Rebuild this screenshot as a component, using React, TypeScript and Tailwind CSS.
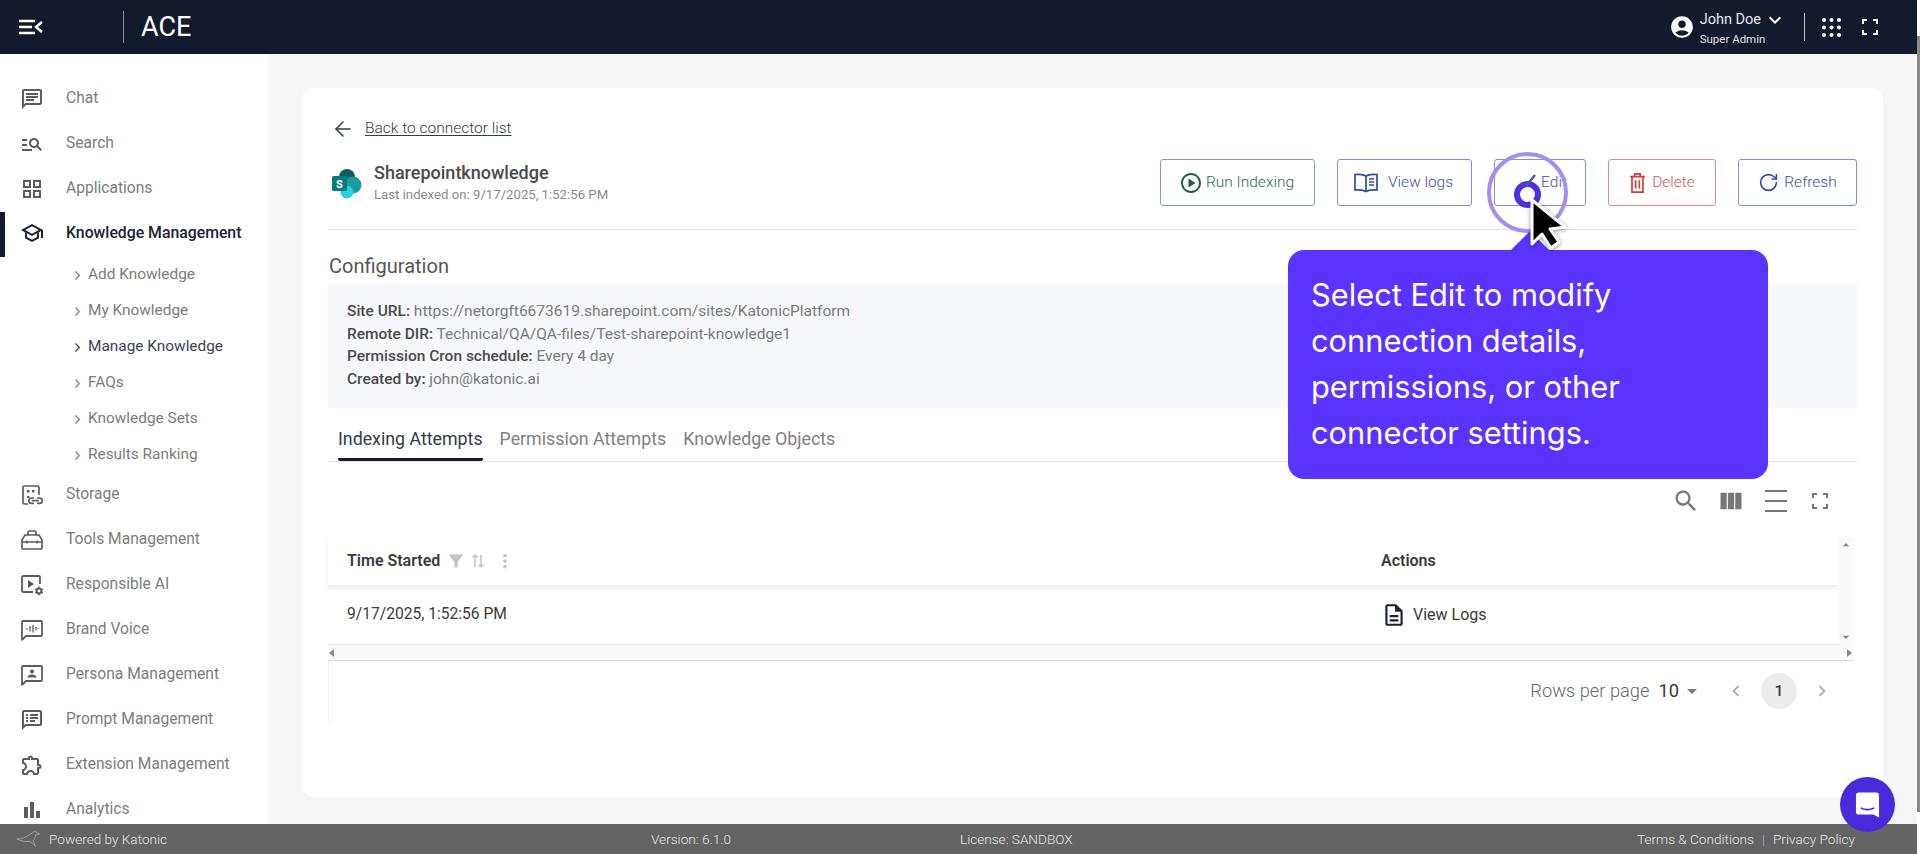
import React from 'react';
import { ChevronRight, RotateCw, ArrowLeft } from 'lucide-react';
import {
  MdOutlineChat,
  MdOutlineManageSearch,
  MdOutlineGridView,
  MdOutlineSchool,
  MdOutlineExtension,
  MdBarChart,
  MdSearch,
  MdViewColumn,
  MdAccountCircle,
  MdKeyboardArrowDown,
  MdOutlinePlayCircle,
  MdOutlineDescription,
  MdFilterAlt,
  MdMoreVert,
  MdChevronLeft,
  MdChevronRight,
  MdArrowDropDown,
  MdOutlineSpeakerNotes,
  MdArrowDropUp,
} from 'react-icons/md';

type IconProps = { className?: string };

const StorageIcon = ({ className }: IconProps) => (
  <svg viewBox="0 0 24 24" fill="none" stroke="currentColor" strokeWidth="1.7" className={className}>
    <path d="M8 21H4.500A1.500 1.500 0 0 1 3 19.500V4.500A1.500 1.500 0 0 1 4.500 3h13A1.500 1.500 0 0 1 19 4.500V12" />
    <path d="M7 7h2.500v2.500H7zM12 7h2.500v2.500H12zM7 13h2.500v2H7z" fill="currentColor" stroke="none" />
    <path d="M14 15h-2.500a2.700 2.700 0 0 0 0 5.400H14M17 15h2.500a2.700 2.700 0 0 1 0 5.400H17M12 17.700h7" />
  </svg>
);

const ToolboxIcon = ({ className }: IconProps) => (
  <svg viewBox="0 0 24 24" fill="none" stroke="currentColor" strokeWidth="1.700" className={className}>
    <path d="M2 12l3-5h14l3 5v8a1 1 0 0 1-1 1H3a1 1 0 0 1-1-1z" />
    <path d="M8 7V4.500A1.500 1.500 0 0 1 9.500 3h5A1.500 1.500 0 0 1 16 4.500V7M2 14h20M7 12.500v3M17 12.500v3" />
  </svg>
);

const ResponsibleIcon = ({ className }: IconProps) => (
  <svg viewBox="0 0 24 24" fill="none" stroke="currentColor" strokeWidth="1.8" className={className}>
    <path d="M13 19H3.500A1.500 1.500 0 0 1 2 17.500v-13A1.500 1.500 0 0 1 3.500 3h15A1.500 1.500 0 0 1 20 4.500V11" />
    <path d="M8 7l6 4-6 4z" fill="currentColor" stroke="none" />
    <circle cx="19" cy="18" r="2.400" strokeWidth="2" />
    <path d="M19 13.800v1.500M19 20.700v1.500M15.300 16l1.300.7M21.400 19.300l1.300.7M15.300 20l1.300-.7M21.400 16.700l1.300-.7" strokeWidth="1.600" />
  </svg>
);

const BrandVoiceIcon = ({ className }: IconProps) => (
  <svg viewBox="0 0 24 24" fill="none" stroke="currentColor" strokeWidth="1.8" className={className}>
    <path d="M3 3h18a1 1 0 0 1 1 1v13a1 1 0 0 1-1 1H6l-3.500 3.500H2V4a1 1 0 0 1 1-1z" />
    <path d="M7 10v1.500M10 8v5.500M13 7v7.500M16 9v3.500M18.500 10v1M5.500 10.500h.1" strokeWidth="1.300" />
  </svg>
);

const PersonaIcon = ({ className }: IconProps) => (
  <svg viewBox="0 0 24 24" fill="none" stroke="currentColor" strokeWidth="1.8" className={className}>
    <path d="M3 3h18a1 1 0 0 1 1 1v13a1 1 0 0 1-1 1H6l-3.500 3.500H2V4a1 1 0 0 1 1-1z" />
    <circle cx="12" cy="8.500" r="2" fill="currentColor" stroke="none" />
    <path d="M7.500 14.500c0-2 2-3 4.500-3s4.500 1 4.500 3z" fill="currentColor" stroke="none" />
  </svg>
);

const KatonicLogo = ({ className }: IconProps) => (
  <svg viewBox="0 0 30 22" fill="none" stroke="#a8a8a8" strokeWidth="1" className={className}>
    <path d="M0 11c6 0 10-2 14-4 2-1 4-3 6-4l3-2 1 2 4 2-5 1c0 3-1 5-3 7l3 7-5-5-3-1c-5 1-10-1-15-3z" />
  </svg>
);

const DotsIcon = ({ className }: IconProps) => (
  <svg viewBox="0 0 19 19" fill="currentColor" className={className}>
    {[2, 9.500, 17].map((cy) =>
      [2, 9.500, 17].map((cx) => <circle key={`${cx}-${cy}`} cx={cx} cy={cy} r="2" />)
    )}
  </svg>
);

const FocusIcon = ({ className }: IconProps) => (
  <svg viewBox="0 0 16 16" fill="none" stroke="currentColor" strokeWidth="2" className={className}>
    <path d="M1 5V1h4M11 1h4v4M15 11v4h-4M5 15H1v-4" />
  </svg>
);

const TrashIcon = ({ className }: IconProps) => (
  <svg viewBox="0 0 18 24" fill="none" stroke="currentColor" strokeWidth="1.800" className={className}>
    <path d="M1 5h16M6 5V2h6v3M3 5v17h12V5M7 9v9M11 9v9" />
  </svg>
);

const BookIcon = ({ className }: IconProps) => (
  <svg viewBox="0 0 26 22" fill="none" stroke="currentColor" strokeWidth="1.700" className={className}>
    <path d="M13 4C11 2.500 7 2 2 2.500v15.500c5-.5 9 0 11 1.500 2-1.500 6-2 11-1.500V2.500C19 2 15 2.500 13 4zM13 4v15.500" />
    <path d="M16 7h5M16 10h5M16 13h5" strokeWidth="1.400" />
  </svg>
);

const MenuCollapseIcon = ({ className }: IconProps) => (
  <svg viewBox="0 0 24 16" fill="none" stroke="currentColor" strokeWidth="2.500" className={className}>
    <path d="M0 2h16M0 8h13M0 14h16M23 3l-6 5 6 5" />
  </svg>
);

const SharepointLogo = ({ className }: IconProps) => (
  <svg viewBox="0 0 32 32" className={className}>
    <circle cx="16" cy="10" r="8" fill="#0b5f5f" />
    <circle cx="22" cy="18" r="8.500" fill="#1a9ba1" />
    <circle cx="16" cy="25" r="6.500" fill="#25d0e0" />
    <rect x="1" y="9" width="15" height="15" rx="1.500" fill="#0a7a7e" />
    <text x="8.500" y="21" fontSize="11" fontWeight="700" fill="#fff" textAnchor="middle" fontFamily="Roboto, sans-serif">S</text>
  </svg>
);

const navTop = [
  { label: 'Chat', icon: MdOutlineChat },
  { label: 'Search', icon: MdOutlineManageSearch },
  { label: 'Applications', icon: MdOutlineGridView },
];

const subItems = ['Add Knowledge', 'My Knowledge', 'Manage Knowledge', 'FAQs', 'Knowledge Sets', 'Results Ranking'];

const navBottom = [
  { label: 'Storage', icon: StorageIcon },
  { label: 'Tools Management', icon: ToolboxIcon },
  { label: 'Responsible AI', icon: ResponsibleIcon },
  { label: 'Brand Voice', icon: BrandVoiceIcon },
  { label: 'Persona Management', icon: PersonaIcon },
  { label: 'Prompt Management', icon: MdOutlineSpeakerNotes },
  { label: 'Extension Management', icon: MdOutlineExtension },
  { label: 'Analytics', icon: MdBarChart },
];

const NavRow = ({ label, icon: Icon }: { label: string; icon: React.ComponentType<IconProps> }) => (
  <div className="flex h-[45px] shrink-0 items-center text-[15.600px] text-[#7c7c7c]">
    <Icon className="ml-[20px] h-[24px] w-[24px] text-[#5c5c5c]" />
    <span className="ml-[22px]">{label}</span>
  </div>
);

const Sidebar = () => (
  <aside className="flex w-[268px] shrink-0 flex-col overflow-hidden bg-white pt-[22px]">
    {navTop.map((item) => (
      <NavRow key={item.label} {...item} />
    ))}
    <div className="relative mt-[-1px] flex h-[45px] shrink-0 items-center text-[15.800px] font-medium text-[#1a2233]">
      <span className="absolute left-0 top-[2px] h-[45px] w-[5px] bg-[#131a2e]" />
      <MdOutlineSchool className="ml-[20px] h-[24px] w-[24px]" />
      <span className="ml-[22px]">Knowledge Management</span>
    </div>
    <div className="mb-[-1px] mt-[2px] flex flex-col">
      {subItems.map((label) => (
        <div
          key={label}
          className={`flex h-[36px] items-center pl-[70px] text-[15.400px] ${
            label === 'Manage Knowledge' ? 'text-[#3c4352]' : 'text-[#7c7c7c]'
          }`}
        >
          <ChevronRight className="h-[15px] w-[15px]" strokeWidth={1.8} />
          <span className="ml-[3px]">{label}</span>
        </div>
      ))}
    </div>
    {navBottom.map((item) => (
      <NavRow key={item.label} {...item} />
    ))}
  </aside>
);

const Header = () => (
  <header className="flex h-[54px] shrink-0 items-center bg-[#131a2e] text-white">
    <MenuCollapseIcon className="ml-[19px] h-[16px] w-[24px]" />
    <span className="ml-[80px] h-[32px] w-px bg-[#8a8f9c]" />
    <span className="ml-[17px] text-[27px] leading-none">ACE</span>
    <div className="ml-auto flex items-center">
      <MdAccountCircle className="h-[26px] w-[26px]" />
      <div className="ml-[5px] flex flex-col">
        <div className="flex items-center text-[14.500px] leading-[18px] text-[#e8e8e8]">
          John Doe
          <MdKeyboardArrowDown className="ml-[2px] h-[24px] w-[24px] text-white" />
        </div>
        <span className="text-[11.500px] leading-[14px] text-[#e0e0e0]">Super Admin</span>
      </div>
      <span className="ml-[17px] h-[28px] w-px bg-[#c8c8c8]" />
      <DotsIcon className="ml-[17px] h-[19px] w-[19px]" />
      <FocusIcon className="ml-[21px] mr-[39px] h-[16px] w-[16px]" />
    </div>
  </header>
);

const ActionButton = ({
  label,
  icon,
  width,
  tone,
}: {
  label: string;
  icon: React.ReactNode;
  width: string;
  tone: string;
}) => (
  <button className={`flex h-[47px] items-center justify-center gap-[3px] rounded-[3px] border text-[15.500px] font-light ${width} ${tone}`}>
    {icon}
    {label}
  </button>
);

const blueTone = 'border-[#8091c8] text-[#3f4f9e]';

const Detail = () => (
  <div className="h-[709px] rounded-[12px] bg-white px-[26px] pt-[29px]">
    <div className="flex h-[24px] items-center text-[#333a48]">
      <ArrowLeft className="ml-[3px] h-[24px] w-[24px]" strokeWidth={1.5} />
      <span className="ml-[10px] text-[15.500px] font-light underline underline-offset-2">Back to connector list</span>
    </div>

    <div className="mt-[18px] flex h-[47px] items-center border-0">
      <SharepointLogo className="ml-[3px] h-[32px] w-[32px]" />
      <div className="ml-[11px] flex flex-col">
        <span className="text-[18px] font-medium leading-[24px] text-[#4a4a4a]">Sharepointknowledge</span>
        <span className="text-[13.200px] leading-[20px] text-[#8a8a8a]">Last indexed on: 9/17/2025, 1:52:56 PM</span>
      </div>
      <div className="ml-auto flex gap-[22px]">
        <ActionButton
          label="Run Indexing"
          width="w-[155px] pr-[2px]"
          tone="border-[#7fa893] text-[#2f6b4c]"
          icon={<MdOutlinePlayCircle className="h-[24px] w-[24px] text-[#1f5f40]" />}
        />
        <ActionButton
          label="View logs"
          width="w-[135px] pr-[3px]"
          tone={blueTone}
          icon={<BookIcon className="mr-[6px] h-[22px] w-[26px] text-[#2f4aa8]" />}
        />
        <ActionButton label="Edit" width="w-[92px] pl-[28px]" tone={blueTone} icon={null} />
        <ActionButton
          label="Delete"
          width="w-[108px]"
          tone="border-[#e58a8a] text-[#d9534f]"
          icon={<TrashIcon className="mr-[3px] h-[22px] w-[17px] text-[#d93636]" />}
        />
        <ActionButton
          label="Refresh"
          width="w-[119px]"
          tone={blueTone}
          icon={<RotateCw className="mr-[2px] h-[21px] w-[21px] text-[#2f4aa8]" strokeWidth={1.8} />}
        />
      </div>
    </div>

    <div className="mt-[23px] border-t border-[#e4e4e4] pl-px pt-[22px] text-[20px] leading-[28px] text-[#555]">Configuration</div>

    <div className="mt-[3px] h-[125px] bg-[#f6f8fb] px-[19px] pt-[17px] text-[15.500px] leading-[22.500px] text-[#7a7a7a]">
      <div><b className="font-medium text-[#4a4a4a]">Site URL:</b> https://netorgft6673619.sharepoint.com/sites/KatonicPlatform</div>
      <div><b className="font-medium text-[#4a4a4a]">Remote DIR:</b> Technical/QA/QA-files/Test-sharepoint-knowledge1</div>
      <div><b className="font-medium text-[#4a4a4a]">Permission Cron schedule:</b> Every 4 day</div>
      <div><b className="font-medium text-[#4a4a4a]">Created by:</b> john@katonic.ai</div>
    </div>

    <div className="flex h-[54px] items-end gap-[17px] border-b border-[#e4e4e4] pl-[10px] text-[17.800px] text-[#808080]">
      <div className="h-[41px] rounded-b-[2px] border-b-[3px] border-[#131a2e] pt-[6px] text-[#333a48]">Indexing Attempts</div>
      <div className="h-[41px] pt-[6px]">Permission Attempts</div>
      <div className="h-[41px] pt-[6px]">Knowledge Objects</div>
    </div>

    <div className="flex h-[75px] items-center justify-end gap-[17px] pr-[29px] pt-[3px] text-[#777]">
      <MdSearch className="h-[28px] w-[28px]" />
      <MdViewColumn className="h-[28px] w-[28px]" />
      <div className="ml-[3px] flex h-[22px] w-[22px] flex-col justify-between">
        <span className="h-[2px] bg-[#777]" />
        <span className="h-[2px] bg-[#777]" />
        <span className="h-[2px] bg-[#777]" />
      </div>
      <FocusIcon className="ml-[8px] h-[16px] w-[16px]" />
    </div>

    <div className="mr-[4px] flex">
      <div className="flex-1">
        <div className="flex h-[48px] items-center shadow-[0_3px_5px_rgba(0,0,0,0.07)]">
          <div className="flex w-[1053px] items-center pl-[19px] text-[16px] font-semibold text-[#3a3a3a]">
            Time Started
            <MdFilterAlt className="ml-[6px] h-[20px] w-[20px] text-[#c4c4c4]" />
            <svg viewBox="0 0 16 16" fill="none" stroke="#c4c4c4" strokeWidth="1.500" className="ml-[4px] h-[16px] w-[16px]">
              <path d="M5 14V2M2.500 4.500L5 2l2.500 2.500M11 2v12M8.500 11.500L11 14l2.500-2.500" />
            </svg>
            <MdMoreVert className="ml-[8px] h-[22px] w-[22px] text-[#c4c4c4]" />
          </div>
          <span className="text-[16px] font-semibold text-[#3a3a3a]">Actions</span>
        </div>
        <div className="flex h-[60px] items-center border-b border-[#e4e4e4] text-[15.600px] text-[#3a3a3a]">
          <div className="w-[1053px] pl-[19px]">9/17/2025, 1:52:56 PM</div>
          <MdOutlineDescription className="h-[26px] w-[26px] text-[#1a2233]" />
          <span className="ml-[6px] text-[16px]">View Logs</span>
        </div>
      </div>
      <div className="flex w-[14px] flex-col items-center justify-between bg-[#fafafa] text-[#888]">
        <MdArrowDropUp className="h-[16px] w-[16px]" />
        <MdArrowDropDown className="h-[16px] w-[16px]" />
      </div>
    </div>

    <div className="mr-[4px] flex h-[16px] items-center justify-between border-b border-[#dcdcdc] bg-[#fafafa] px-[1px] text-[#888]">
      <span className="h-0 w-0 border-y-[4px] border-r-[5px] border-y-transparent border-r-[#888]" />
      <span className="h-0 w-0 border-y-[4px] border-l-[5px] border-y-transparent border-l-[#888]" />
    </div>

    <div className="mr-[4px] flex h-[62px] items-center justify-end border-l border-[#f2f2f2] pb-[2px]">
      <span className="text-[18.300px] font-light text-[#666]">Rows per page</span>
      <span className="ml-[9px] text-[18.300px] text-[#3a3a3a]">10</span>
      <MdArrowDropDown className="ml-[1px] h-[24px] w-[24px] text-[#777]" />
      <MdChevronLeft className="ml-[21px] h-[22px] w-[22px] text-[#aaa]" />
      <span className="ml-[14px] flex h-[36px] w-[36px] items-center justify-center rounded-full bg-[#ececec] text-[15px] font-medium text-[#3a3a3a]">1</span>
      <MdChevronRight className="ml-[14px] mr-[20px] h-[22px] w-[22px] text-[#aaa]" />
    </div>
  </div>
);

const Footer = () => (
  <footer className="flex h-[30px] shrink-0 items-center bg-[#646464] text-[13.600px] font-light text-[#e6e6e6]">
    <KatonicLogo className="ml-[15px] h-[18px] w-[28px]" />
    <span className="ml-[6px] w-[602px]">Powered by Katonic</span>
    <span className="w-[309px]">Version: 6.1.0</span>
    <span>License: SANDBOX</span>
    <span className="ml-auto">Terms &amp; Conditions</span>
    <span className="mx-[8px] text-[#b9a9d6]">|</span>
    <span className="mr-[62px]">Privacy Policy</span>
  </footer>
);

const Overlay = () => (
  <>
    {/* walkthrough highlight around the Edit button */}
    <div className="absolute left-[1487px] top-[152px] h-[81px] w-[81px] rounded-full border-[4px] border-[#a48ff0]" />
    <div className="absolute left-[1514px] top-[181px] h-[27px] w-[27px] rounded-full border-[6px] border-[#4f2fe3]" />
    <svg viewBox="0 0 12 14" className="absolute left-[1525px] top-[173px] h-[14px] w-[12px]" fill="none" stroke="#3f5bb5" strokeWidth="2.500">
      <path d="M1 13L10 2" />
    </svg>
    <svg viewBox="0 0 40 20" className="absolute left-[1510px] top-[231px] h-[20px] w-[40px]" fill="#5b33ff">
      <path d="M0 20L20 0l20 20z" />
    </svg>
    <div className="absolute left-[1288px] top-[250px] h-[229px] w-[480px] rounded-[16px] bg-[#5b33ff] pl-[23px] pt-[22px] font-['Inter',sans-serif] text-[30.800px] leading-[46px] text-white">
      Select Edit to modify
      <br />
      connection details,
      <br />
      permissions, or other
      <br />
      connector settings.
    </div>
    <svg viewBox="0 0 40 54" className="absolute left-[1529px] top-[197px] h-[54px] w-[40px] drop-shadow-[0_1px_2px_rgba(0,0,0,0.4)]">
      <path d="M3 3v44l10-10 9 14 8-6-9-13 15-2z" fill="#000" stroke="#fff" strokeWidth="3" strokeLinejoin="round" />
    </svg>
    {/* chat launcher */}
    <div className="absolute left-[1840px] top-[777px] flex h-[55px] w-[55px] items-center justify-center rounded-full bg-[#4a2bdc]">
      <svg viewBox="0 0 26 28" className="h-[28px] w-[25px]">
        <path d="M4 1h18a3 3 0 0 1 3 3v23l-6-3H4a3 3 0 0 1-3-3V4a3 3 0 0 1 3-3z" fill="#fff" />
        <path d="M6 17c4 2.500 10 2.500 14 0" fill="none" stroke="#4a2bdc" strokeWidth="1.800" />
      </svg>
    </div>
  </>
);

export default function App() {
  return (
    <div className="relative flex h-[854px] w-full overflow-hidden bg-white font-['Roboto',sans-serif]">
      <div className="flex min-w-0 flex-1 flex-col">
        <Header />
        <div className="flex min-h-0 flex-1">
          <Sidebar />
          <main className="flex-1 bg-[#f6f6f6] px-[34px] pt-[34px]">
            <Detail />
          </main>
        </div>
        <Footer />
      </div>
      {/* page scrollbar */}
      <div className="flex w-[3px] shrink-0 flex-col bg-white pt-[36px] pb-[42px]">
        <div className="flex-1 bg-[#8a8a8a]" />
      </div>
      <Overlay />
    </div>
  );
}
